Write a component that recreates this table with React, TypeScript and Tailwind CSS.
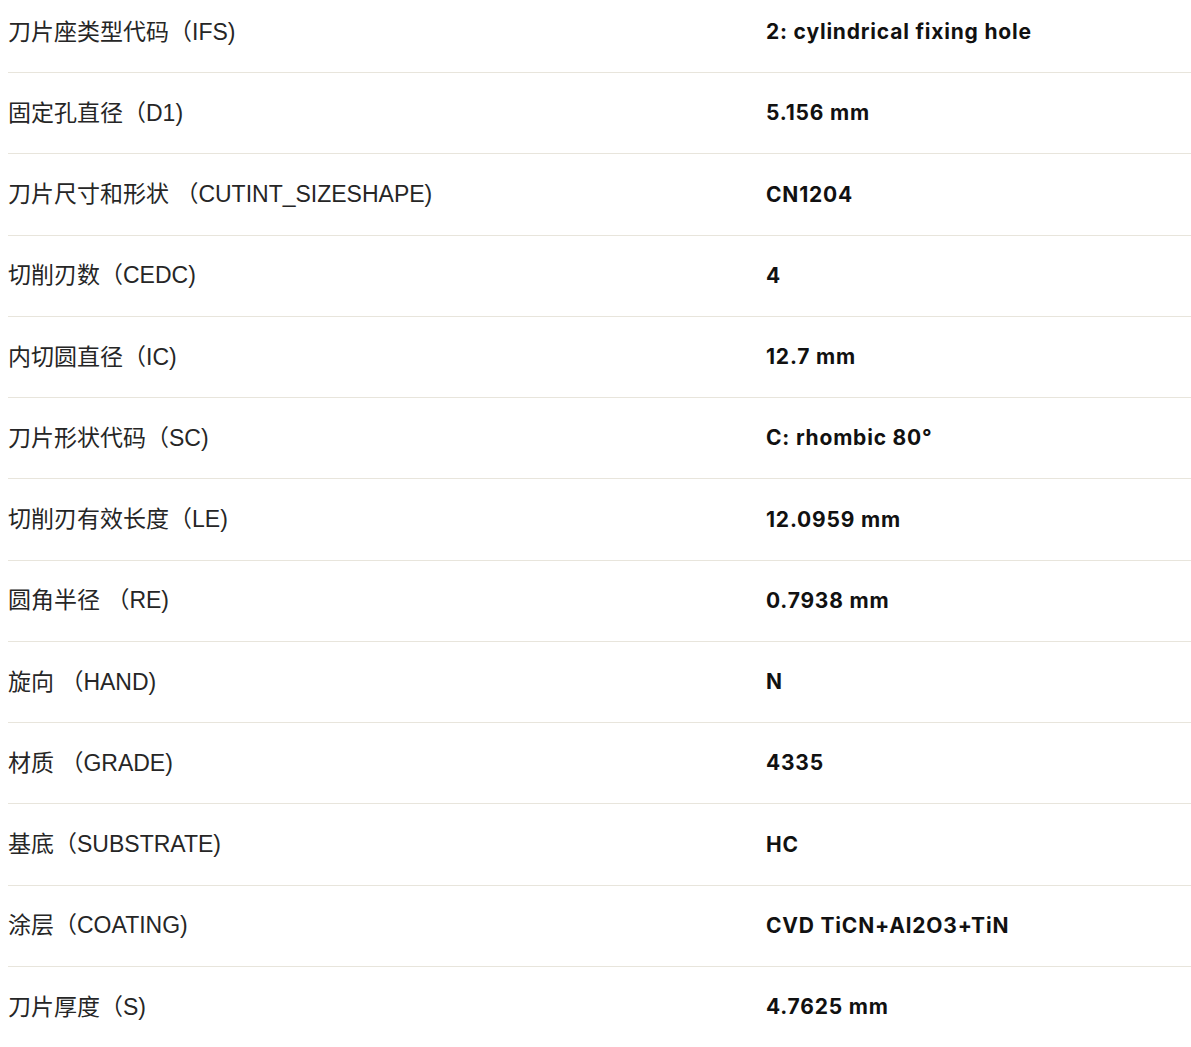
const rows: { label: string; value: string }[] = [
    { label: '刀片座类型代码（IFS)', value: '2: cylindrical fixing hole' },
    { label: '固定孔直径（D1)', value: '5.156 mm' },
    { label: '刀片尺寸和形状 （CUTINT_SIZESHAPE)', value: 'CN1204' },
    { label: '切削刃数（CEDC)', value: '4' },
    { label: '内切圆直径（IC)', value: '12.7 mm' },
    { label: '刀片形状代码（SC)', value: 'C: rhombic 80°' },
    { label: '切削刃有效长度（LE)', value: '12.0959 mm' },
    { label: '圆角半径 （RE)', value: '0.7938 mm' },
    { label: '旋向 （HAND)', value: 'N' },
    { label: '材质 （GRADE)', value: '4335' },
    { label: '基底（SUBSTRATE)', value: 'HC' },
    { label: '涂层（COATING)', value: 'CVD TiCN+Al2O3+TiN' },
    { label: '刀片厚度（S)', value: '4.7625 mm' },
];

const App = () => {
    return (
        <div className="min-h-screen bg-white overflow-hidden">
            {/* spec table, first row is scrolled a bit off the top */}
            <div className="pl-2 -mt-[8.25px] flex flex-col">
                {rows.map((row) => (
                    <div
                        key={row.label}
                        className="h-[81.25px] flex items-center border-b border-[#e8e5dc]"
                    >
                        <div className="w-[758px] shrink-0 text-[23px] text-[#262626] font-['Liberation_Sans','Noto_Sans_CJK_SC',sans-serif]">
                            {row.label}
                        </div>
                        <div className="text-[21px] font-bold tracking-[0.8px] text-[#111111] font-['Inter','Noto_Sans_CJK_SC',sans-serif]">
                            {row.value}
                        </div>
                    </div>
                ))}
            </div>
        </div>
    );
};

export default App;
